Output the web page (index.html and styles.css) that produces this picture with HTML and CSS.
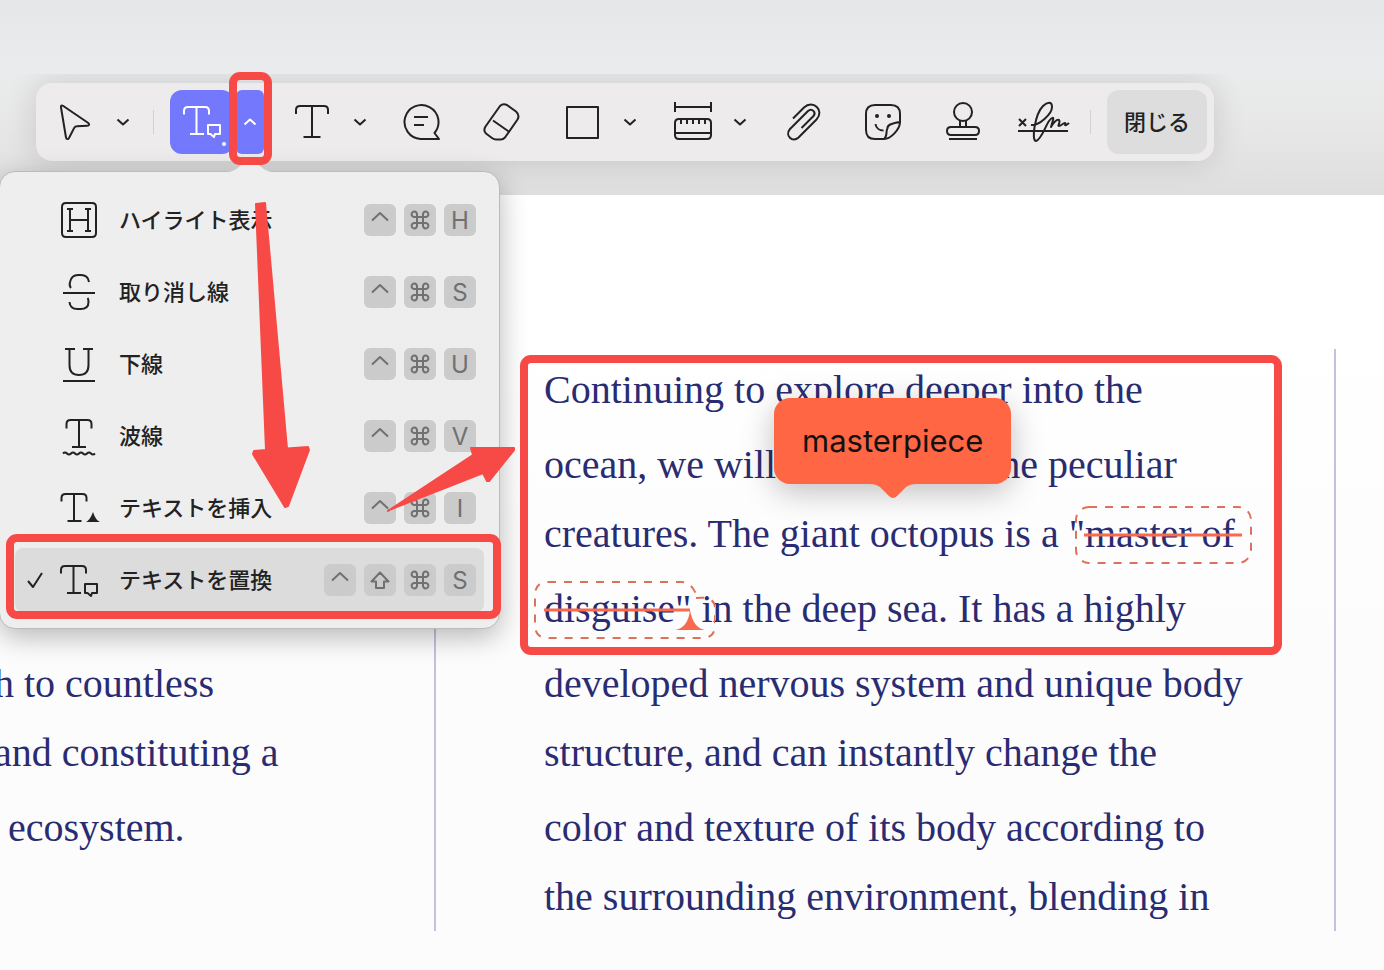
FILE: index.html
```
<!DOCTYPE html>
<html lang="ja">
<head>
    <meta charset="UTF-8">
    <meta name="viewport" content="width=device-width, initial-scale=1.0">
    <title>PDF</title>
    <link rel="stylesheet" href="styles.css">
</head>
<body>
    <!-- Shared icons -->
    <svg class="sprite" aria-hidden="true">
        <symbol id="down" viewBox="0 0 14 8"><path d="M1.5 1.5 7 6.5l5.5-5"/></symbol>
        <symbol id="up" viewBox="0 0 14 8"><path d="M1.5 6.5 7 1.5l5.5 5"/></symbol>
        <symbol id="ctrl" viewBox="0 0 32 32"><path d="M8 16.500l8-7.500 8 7.500"/></symbol>
        <symbol id="shift" viewBox="0 0 32 32"><path d="M16 8.500 7.500 17.500h4.500v6.500h8v-6.500h4.500z"/></symbol>
        <symbol id="cmd" viewBox="0 0 32 32"><path d="M13 13h6v6h-6zM13 13h-2.500a2.700 2.700 0 1 1 2.500-2.500zM19 13v-2.500a2.700 2.700 0 1 1 2.500 2.500zM19 19h2.500a2.700 2.700 0 1 1-2.500 2.500zM13 19v2.500a2.700 2.700 0 1 1-2.500-2.500z"/></symbol>
        <symbol id="replace" viewBox="0 0 40 40"><path d="M2 12.500V9q0-4 4-4h17q4 0 4 4v3.500M14.500 5v27M8 32h14M26 23h12v9h-5l-1 3-3.500-3H26z"/></symbol>
    </svg>

    <header class="top">
        <div class="toolbar">
            <div class="group">
                <button class="tool" aria-label="選択"><svg viewBox="0 0 40 40"><path d="M6 5.500c-.500-2 .800-2.500 2.300-1.500l25 17c1.500 1.200 1 2.600-1 2.700l-10.500.600c-1.200 0-2 .600-2.600 1.600L14 36c-1 1.600-2.800 1.300-3-.500z"/></svg></button>
                <button class="more" aria-label="選択の種類"><svg><use href="#down"/></svg></button>
            </div>
            <span class="divider"></span>
            <div class="group active">
                <button class="tool" aria-label="テキストを置換"><svg><use href="#replace"/></svg><span class="dot"></span></button>
                <button class="more" aria-label="マークアップの種類"><svg><use href="#up"/></svg></button>
            </div>
            <div class="group">
                <button class="tool" aria-label="テキスト"><svg viewBox="0 0 40 40"><path d="M4 12V8q0-4 4-4h24q4 0 4 4v4M20 4v31M11.500 35h17"/></svg></button>
                <button class="more" aria-label="テキストの種類"><svg><use href="#down"/></svg></button>
            </div>
            <button class="tool" aria-label="ノート"><svg viewBox="0 0 40 40"><path d="M37 37H18.500A17 17 0 1 1 32.500 31zM12 15h14M12 23h10"/></svg></button>
            <button class="tool" aria-label="消しゴム"><svg viewBox="0 0 40 40"><path d="M3.500 24.500 18 4q3-3 7-1l9 6.500q4 3.500 1.500 8L23 35.500q-2 2-4 2h-5q-2 0-4-1.500L4 31.500q-3-3-.500-7zM11 18.500l16.500 11.500"/></svg></button>
            <div class="group">
                <button class="tool" aria-label="図形"><svg viewBox="0 0 40 40"><path d="M5 5h31v31H5z"/></svg></button>
                <button class="more" aria-label="図形の種類"><svg><use href="#down"/></svg></button>
            </div>
            <div class="group">
                <button class="tool" aria-label="測定"><svg viewBox="0 0 40 40"><path d="M3 0v10M39 0v10M3 5h36M7 17h28q4 0 4 4v12q0 4-4 4H7q-4 0-4-4V21q0-4 4-4zM3 31h36M9 17v5M15 17v5M21 17v5M27 17v5M33 17v5"/></svg></button>
                <button class="more" aria-label="測定の種類"><svg><use href="#down"/></svg></button>
            </div>
            <button class="tool" aria-label="添付"><svg viewBox="0 0 40 40"><path d="M11 16.500 22 5.500c9-8.500 21 3 12.500 12L16.500 35.500c-6 5.500-14-2-8.500-8.500L26 9c4-3.500 8.500 1.500 5.500 5L19.500 26"/></svg></button>
            <button class="tool" aria-label="ステッカー"><svg viewBox="0 0 40 40"><path d="M22 37h-9q-9 0-9-9V12q0-9 9-9h16q9 0 9 9v8c0 7-9 17-16 17zM38 20c-9 1.500-13 3-12.500 6.500C23.500 28 26 34 22 37M13.500 22c.500 4 4 6.500 8 6.500"/><circle class="fill" cx="15" cy="14" r="2"/><circle class="fill" cx="27" cy="14" r="2"/></svg></button>
            <button class="tool" aria-label="スタンプ"><svg viewBox="0 0 40 40"><circle cx="21" cy="10" r="9"/><path d="M18 19v5.500M24 19v5.500M9 25h24q4 0 4 4t-4 4H9q-4 0-4-4t4-4zM7 37h28"/></svg></button>
            <button class="tool" aria-label="署名"><svg class="wide" viewBox="0 0 56 44"><path d="M5 19l7 7M12 19l-7 7M4 31h50M17 25c8 1 21-11 21-18 0-6-5-5-9-1-8 8-12 35-7 35 5-1 9-14 13-20 3-4 5-4 4-1l-2 7c3-5 6-8 8-7 2 2-2 6 0 6s4-3 6-3c1 0-1 3 1 2s3-2 3-2"/></svg></button>
            <span class="divider"></span>
            <button class="close"><span>閉じる</span></button>
        </div>

        <!-- Markup menu -->
        <div class="menu" role="menu">
            <svg class="notch" viewBox="0 0 60 20"><path d="M6 20q8 0 14-6l8-9h4l8 9q6 6 14 6z"/></svg>
            <button class="item" role="menuitem">
                <span class="check"></span>
                <svg class="icon" viewBox="0 0 40 40"><path d="M7 3h26q4 0 4 4v26q0 4-4 4H7q-4 0-4-4V7q0-4 4-4zM11 9v22M29 9v22M11 20h18M8 9h6M26 9h6M8 31h6M26 31h6"/></svg>
                <span class="label">ハイライト表示</span>
                <kbd><svg><use href="#ctrl"/></svg></kbd><kbd><svg><use href="#cmd"/></svg></kbd><kbd>H</kbd>
            </button>
            <button class="item" role="menuitem">
                <span class="check"></span>
                <svg class="icon" viewBox="0 0 40 40"><path d="M4 21h32M12 16q-2-2-1-6 1.500-7 8-7h3q7 0 8 7M10.500 30q.500 7 8 7h3q8 0 8-7 0-3-1-4"/></svg>
                <span class="label">取り消し線</span>
                <kbd><svg><use href="#ctrl"/></svg></kbd><kbd><svg><use href="#cmd"/></svg></kbd><kbd>S</kbd>
            </button>
            <button class="item" role="menuitem">
                <span class="check"></span>
                <svg class="icon" viewBox="0 0 40 40"><path d="M6 5h10M24 5h10M10.500 5v16q0 10 9.500 10t9.500-10V5M4 37h32"/></svg>
                <span class="label">下線</span>
                <kbd><svg><use href="#ctrl"/></svg></kbd><kbd><svg><use href="#cmd"/></svg></kbd><kbd>U</kbd>
            </button>
            <button class="item" role="menuitem">
                <span class="check"></span>
                <svg class="icon" viewBox="0 0 40 40"><path d="M7.500 12.500V8q0-4 4-4h17q4 0 4 4v4.500M20 4v27M13 31h14M4 37.500q2-2 4 0t4 0 4 0 4 0 4 0 4 0 4 0 4 0"/></svg>
                <span class="label">波線</span>
                <kbd><svg><use href="#ctrl"/></svg></kbd><kbd><svg><use href="#cmd"/></svg></kbd><kbd>V</kbd>
            </button>
            <button class="item" role="menuitem">
                <span class="check"></span>
                <svg class="icon" viewBox="0 0 40 40"><path d="M2.500 13.500V10q0-4 4-4h17q4 0 4 4v3.500M15 6v27M8.500 33h14"/><path class="fill" d="M27 34q4-2 7-10 2.500 8 7 10z"/></svg>
                <span class="label">テキストを挿入</span>
                <kbd><svg><use href="#ctrl"/></svg></kbd><kbd><svg><use href="#cmd"/></svg></kbd><kbd>I</kbd>
            </button>
            <button class="item selected" role="menuitem">
                <svg class="check" viewBox="0 0 24 24"><path d="M5 13l5 6 9-14"/></svg>
                <svg class="icon"><use href="#replace" y="1"/></svg>
                <span class="label">テキストを置換</span>
                <kbd><svg><use href="#ctrl"/></svg></kbd><kbd><svg><use href="#shift"/></svg></kbd><kbd><svg><use href="#cmd"/></svg></kbd><kbd>S</kbd>
            </button>
        </div>
    </header>

    <!-- Document columns -->
    <main class="page" lang="en">
        <div class="column first">
            <p class="line loose">h to countless</p>
            <p class="line">and constituting a</p>
            <p class="line loose indent">ecosystem.</p>
            <p class="line">&nbsp;</p>
        </div>
        <div class="column second">
            <p class="line loose">Continuing to explore deeper into the</p>
            <p class="line loose split"><span>ocean, we will</span><span>he peculiar</span></p>
            <p class="line">creatures. The giant octopus is a "<span class="mark">master of
                <svg class="strike" viewBox="0 0 184 64"><rect x="4" y="4" width="175" height="56" rx="13"/><path d="M12 32h158"/></svg></span></p>
            <p class="line loose"><span class="mark">disguise"
                <svg class="strike" viewBox="0 0 184 64"><path class="dash" d="M17 4H150q10 0 15 12M165 20q19-2 19 10V47q0 13-13 13H17Q4 60 4 47V17Q4 4 17 4"/><path d="M13 32h146"/><path class="fill" d="M144 52q13-2 15-20 3 18 15 20z"/></svg></span> in the deep sea. It has a highly</p>
            <p class="line loose">developed nervous system and unique body</p>
            <p class="line">structure, and can instantly change the</p>
            <p class="line loose">color and texture of its body according to</p>
            <p class="line">the surrounding environment, blending in</p>
            <div class="callout">masterpiece
                <svg viewBox="0 0 48 16"><path d="M0 0h48q-9 0-13 5l-7 7q-4 4-8 0l-7-7Q9 0 0 0z"/></svg>
            </div>
        </div>
    </main>

    <!-- Red guide boxes and arrows -->
    <svg class="guide" viewBox="0 0 1384 970" aria-hidden="true">
        <rect x="233" y="76" width="35" height="85" rx="7"/>
        <rect x="10" y="538" width="487" height="77" rx="7"/>
        <rect x="524" y="359" width="754" height="292" rx="7"/>
        <path d="M256 204l9-1 22 245.500 21-1.500 1 3-21 56-3 1-32-53 1-3 12-1z"/>
        <path d="M388 511l85-56-2-7 43 0 0 2-25 31-2 0-4-8-94 37z"/>
    </svg>
</body>
</html>
```
FILE: styles.css
```
* {
    box-sizing: border-box;
}

body {
    margin: 0;
    min-height: 100vh;
    position: relative;
    overflow: hidden;
    display: flex;
    flex-direction: column;
    font-family: Inter, "Noto Sans CJK JP", sans-serif;
    color: #222;
    background: linear-gradient(#fff 300px, #fcfcfd 700px);
}

button {
    font: inherit;
    color: inherit;
    border: none;
    padding: 0;
    background: none;
    cursor: pointer;
}

svg {
    fill: none;
    stroke: currentColor;
    stroke-width: 2;
    stroke-linejoin: round;
}

.fill {
    fill: currentColor;
    stroke: none;
}

.sprite {
    position: absolute;
    width: 0;
    height: 0;
}

/* Toolbar */
.top {
    position: relative;
    z-index: 1;
    height: 195px;
    padding: 83px 36px 0;
    background: linear-gradient(#e6e7e9 0, #eaebec 70px, #e8e8e8 120px, #dedede 100%);
}

.toolbar {
    display: flex;
    align-items: center;
    gap: 16px;
    width: fit-content;
    padding: 7px;
    border-radius: 16px;
    background-color: #edebec;
    box-shadow: 0 0 32px rgba(0, 0, 0, 0.14);
    clip-path: inset(-9px -40px -34px -40px);
}

.group {
    display: flex;
    gap: 2px;
}

.tool,
.more {
    display: flex;
    align-items: center;
    justify-content: center;
    position: relative;
    width: 64px;
    height: 64px;
    border-radius: 12px;
}

.more {
    width: 28px;
    border-radius: 6px;
}

.tool svg {
    width: 40px;
    height: 40px;
}

.tool .wide {
    width: 56px;
    height: 44px;
}

.more svg {
    width: 14px;
    height: 8px;
}

.active {
    color: #fff;
}

.active .tool,
.active .more {
    background-color: #7478fd;
}

.dot {
    position: absolute;
    right: 8px;
    bottom: 8px;
    width: 4px;
    height: 4px;
    border-radius: 50%;
    background-color: #fff;
}

.divider {
    width: 1px;
    height: 24px;
    background-color: #d2d0d1;
}

.close {
    height: 64px;
    padding: 0 17px 4px;
    border-radius: 12px;
    font-size: 22px;
    font-weight: 500;
    background-color: #dddddd;
}

/* Menu */
.menu {
    position: absolute;
    top: 171px;
    left: -1px;
    width: 501px;
    display: flex;
    flex-direction: column;
    gap: 8px;
    padding: 16px 15px;
    border: 1px solid #bbb;
    border-radius: 16px;
    background-color: #eee;
    box-shadow: 0 8px 28px rgba(0, 0, 0, 0.28);
}

.notch {
    position: absolute;
    top: -20px;
    left: 220px;
    width: 60px;
    height: 20px;
    fill: #eee;
    stroke: none;
}

.item {
    display: flex;
    align-items: center;
    height: 64px;
    padding: 0 8px;
    border-radius: 8px;
    text-align: left;
}

.selected {
    background-color: #dcdcdc;
}

.check {
    width: 24px;
    height: 24px;
}

.icon {
    width: 40px;
    height: 40px;
    margin: 0 20px 0 12px;
    overflow: visible;
}

.label {
    flex: 1;
    padding-bottom: 4px;
    font-size: 22px;
    font-weight: 500;
}

kbd {
    display: flex;
    align-items: center;
    justify-content: center;
    width: 32px;
    height: 32px;
    margin-left: 8px;
    border-radius: 6px;
    font-family: Inter, sans-serif;
    font-size: 24px;
    color: #707070;
    background-color: #cbcbcb;
}

kbd svg {
    width: 32px;
    height: 32px;
}

/* Document */
.page {
    flex: 1;
    display: grid;
    grid-template-columns: 436px 900px 1fr;
    align-items: end;
    padding: 154px 0 41px;
    font-family: "Liberation Serif", serif;
    font-size: 40px;
    color: #2a2c72;
}

.column {
    position: relative;
    border-right: 2px solid #c6c0e0;
    white-space: nowrap;
}

.first {
    align-self: stretch;
    display: flex;
    flex-direction: column;
    justify-content: flex-end;
    margin-left: -6px;
}

.second {
    padding-left: 108px;
}

.line {
    margin: 0;
    line-height: 69px;
}

.loose {
    margin-top: 6px;
}

.indent {
    padding-left: 14px;
}

.split {
    display: flex;
    gap: 224px;
}

.mark {
    position: relative;
}

.strike {
    position: absolute;
    top: -8px;
    left: -13px;
    width: 184px;
    height: 64px;
    color: #f9694b;
    stroke-width: 3;
}

.strike rect,
.strike .dash {
    stroke: #dc7259;
    stroke-width: 2;
    stroke-dasharray: 8 8;
}

.callout {
    position: absolute;
    top: 49px;
    left: 338px;
    padding: 0 28px;
    border-radius: 16px;
    font-family: Inter, sans-serif;
    font-size: 31px;
    line-height: 86px;
    color: #111;
    background-color: #ff6644;
    box-shadow: 0 8px 32px rgba(0, 0, 0, 0.25);
}

.callout svg {
    position: absolute;
    top: 100%;
    left: 50%;
    width: 48px;
    height: 16px;
    margin-left: -24px;
    fill: #ff6644;
    stroke: none;
}

/* Guides */
.guide {
    position: absolute;
    z-index: 2;
    top: 0;
    left: 0;
    width: 1384px;
    height: 970px;
    pointer-events: none;
    stroke: #f74a46;
}

.guide rect {
    stroke-width: 8;
}

.guide path {
    fill: #f74a46;
}
```
